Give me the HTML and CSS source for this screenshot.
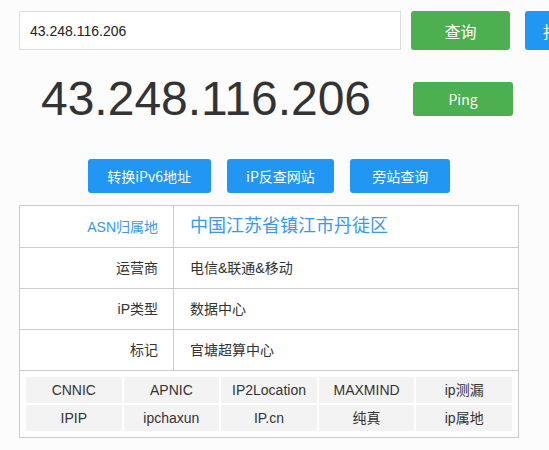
FILE: index.html
```html
<!DOCTYPE html>
<html lang="zh-CN">
<head>
    <meta charset="UTF-8">
    <meta name="viewport" content="width=device-width, initial-scale=1.0">
    <title>IP查询</title>
    <link rel="stylesheet" href="styles.css">
</head>
<body>

    <div class="page">
        <div class="search-row">
            <input class="search-input" type="text" value="43.248.116.206">
            <button class="btn btn-green btn-query">查询</button>
            <button class="btn btn-blue btn-batch">批量查询</button>
        </div>

        <div class="ip-row">
            <div class="ip-big">43.248.116.206</div>
            <button class="btn btn-green btn-ping">Ping</button>
        </div>

        <div class="tools">
            <button class="btn btn-blue btn-tool">转换iPv6地址</button>
            <button class="btn btn-blue btn-tool">iP反查网站</button>
            <button class="btn btn-blue btn-tool">旁站查询</button>
        </div>

        <table class="info">
            <tr class="row-main">
                <td class="label">ASN归属地</td>
                <td class="value">中国江苏省镇江市丹徒区</td>
            </tr>
            <tr>
                <td class="label">运营商</td>
                <td class="value">电信&amp;联通&amp;移动</td>
            </tr>
            <tr>
                <td class="label">iP类型</td>
                <td class="value">数据中心</td>
            </tr>
            <tr>
                <td class="label">标记</td>
                <td class="value">官塘超算中心</td>
            </tr>
            <tr>
                <td class="sources" colspan="2">
                    <div class="source-grid">
                        <a class="source">CNNIC</a>
                        <a class="source">APNIC</a>
                        <a class="source">IP2Location</a>
                        <a class="source">MAXMIND</a>
                        <a class="source">ip测漏</a>
                        <a class="source">IPIP</a>
                        <a class="source">ipchaxun</a>
                        <a class="source">IP.cn</a>
                        <a class="source">纯真</a>
                        <a class="source">ip属地</a>
                    </div>
                </td>
            </tr>
        </table>
    </div>

</body>
</html>
```

FILE: styles.css
```css
body {
    font-family: "Liberation Sans", "Noto Sans CJK SC", sans-serif;
    margin: 0;
    padding: 0;
    background-color: #fcfcfc;
    color: #333;
    overflow: hidden;
}

.page {
    padding: 11px 0 0 19px;
}

.search-row {
    display: flex;
    width: max-content;
}

.search-input {
    box-sizing: border-box;
    width: 382px;
    height: 39px;
    flex-shrink: 0;
    border: 1px solid #ddd;
    background: white;
    padding: 0 10px;
    font-family: "Liberation Sans", sans-serif;
    font-size: 14px;
    color: #222;
    outline: none;
}

.btn {
    font-family: "Noto Sans CJK SC", "Liberation Sans", sans-serif;
    color: white;
    border: none;
    border-radius: 3px;
    cursor: pointer;
    flex-shrink: 0;
    padding: 0;
}

.btn-green { background-color: #4caf50; }
.btn-blue { background-color: #2196f3; }

.btn-query {
    width: 99px;
    height: 39px;
    margin-left: 10px;
    font-size: 16px;
}

.btn-batch {
    width: 100px;
    height: 39px;
    margin-left: 15px;
    font-size: 16px;
}

.ip-row {
    display: flex;
    align-items: center;
    margin-top: 25px;
}

.ip-big {
    width: 374px;
    margin-right: 8px;
    text-align: center;
    font-size: 48px;
    line-height: 48px;
    color: #333;
}

.btn-ping {
    width: 100px;
    height: 34px;
    margin-left: 12px;
    font-size: 14px;
}

.tools {
    width: 500px;
    display: flex;
    justify-content: center;
    gap: 16px;
    margin-top: 36px;
}

.btn-tool {
    height: 34px;
    min-width: 100px;
    padding: 0 19.5px;
    font-size: 14px;
}

.info {
    width: 500px;
    margin-top: 12px;
    border-collapse: collapse;
    background: white;
    font-size: 14px;
}

.info td {
    border: 1px solid #ccc;
    padding: 10px 15px;
    line-height: 20px;
}

.info .label {
    width: 123px;
    text-align: right;
}

.row-main .label { color: #3a97f0; }

.row-main .value {
    color: #3a97f0;
    font-size: 18px;
    line-height: 21px;
    padding-left: 16px;
}

.info .value { padding-left: 16px; }

.info .sources { padding: 6px; }

.source-grid {
    display: grid;
    grid-template-columns: repeat(5, 1fr);
    gap: 2px;
}

.source {
    background-color: #f3f3f3;
    height: 26px;
    line-height: 26px;
    text-align: center;
    color: #333;
    cursor: pointer;
}
```
